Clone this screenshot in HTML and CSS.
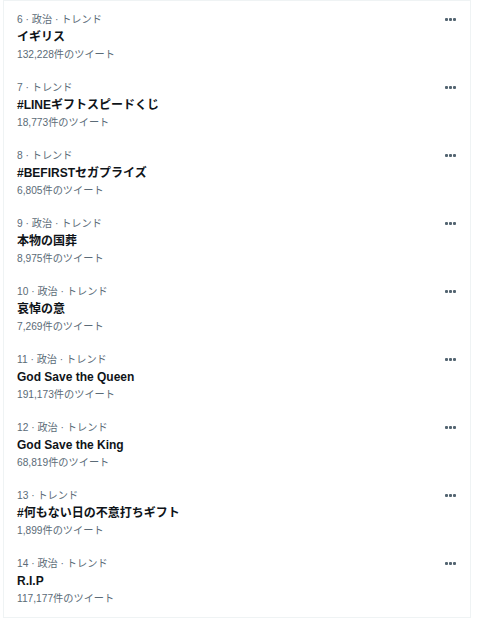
FILE: index.html
```html
<!DOCTYPE html>
<html lang="ja">
<head>
<meta charset="utf-8">
<link rel="stylesheet" href="styles.css">
</head>
<body>
<div class="panel">
  <div class="trend">
    <div class="info">
      <div class="meta">6 · 政治 · トレンド</div>
      <div class="title">イギリス</div>
      <div class="count">132,228件のツイート</div>
    </div>
    <div class="more"><span></span><span></span><span></span></div>
  </div>
  <div class="trend">
    <div class="info">
      <div class="meta">7 · トレンド</div>
      <div class="title">#LINEギフトスピードくじ</div>
      <div class="count">18,773件のツイート</div>
    </div>
    <div class="more"><span></span><span></span><span></span></div>
  </div>
  <div class="trend">
    <div class="info">
      <div class="meta">8 · トレンド</div>
      <div class="title">#BEFIRSTセガプライズ</div>
      <div class="count">6,805件のツイート</div>
    </div>
    <div class="more"><span></span><span></span><span></span></div>
  </div>
  <div class="trend">
    <div class="info">
      <div class="meta">9 · 政治 · トレンド</div>
      <div class="title">本物の国葬</div>
      <div class="count">8,975件のツイート</div>
    </div>
    <div class="more"><span></span><span></span><span></span></div>
  </div>
  <div class="trend">
    <div class="info">
      <div class="meta">10 · 政治 · トレンド</div>
      <div class="title">哀悼の意</div>
      <div class="count">7,269件のツイート</div>
    </div>
    <div class="more"><span></span><span></span><span></span></div>
  </div>
  <div class="trend">
    <div class="info">
      <div class="meta">11 · 政治 · トレンド</div>
      <div class="title">God Save the Queen</div>
      <div class="count">191,173件のツイート</div>
    </div>
    <div class="more"><span></span><span></span><span></span></div>
  </div>
  <div class="trend">
    <div class="info">
      <div class="meta">12 · 政治 · トレンド</div>
      <div class="title">God Save the King</div>
      <div class="count">68,819件のツイート</div>
    </div>
    <div class="more"><span></span><span></span><span></span></div>
  </div>
  <div class="trend">
    <div class="info">
      <div class="meta">13 · トレンド</div>
      <div class="title">#何もない日の不意打ちギフト</div>
      <div class="count">1,899件のツイート</div>
    </div>
    <div class="more"><span></span><span></span><span></span></div>
  </div>
  <div class="trend">
    <div class="info">
      <div class="meta">14 · 政治 · トレンド</div>
      <div class="title">R.I.P</div>
      <div class="count">117,177件のツイート</div>
    </div>
    <div class="more"><span></span><span></span><span></span></div>
  </div>
</div>
</body>
</html>
```
FILE: styles.css
```css
html, body {
  margin: 0;
  padding: 0;
  background: #ffffff;
}
body {
  font-family: "Liberation Sans", "Noto Sans CJK JP", sans-serif;
  color: #0f1419;
}
.panel {
  margin-left: 3px;
  width: 466px;
  height: 616px;
  border: 1px solid #eff3f4;
  display: flex;
  flex-direction: column;
}
.trend {
  height: 68px;
  flex: none;
  box-sizing: border-box;
  padding: 12px 14px 0 13px;
  display: flex;
  justify-content: space-between;
  align-items: flex-start;
}
.info {
  display: flex;
  flex-direction: column;
}
.meta, .count {
  font-size: 10.2px;
  line-height: 14px;
  color: #5b6b77;
}
.count {
  line-height: 16px;
}
.title {
  margin-top: 1px;
  font-size: 12px;
  line-height: 19px;
  font-weight: 700;
  color: #0f1419;
}
.more {
  display: flex;
  gap: 1px;
  margin-top: 5px;
}
.more span {
  width: 3px;
  height: 3px;
  background: #536471;
  border-radius: 1px;
}
```
